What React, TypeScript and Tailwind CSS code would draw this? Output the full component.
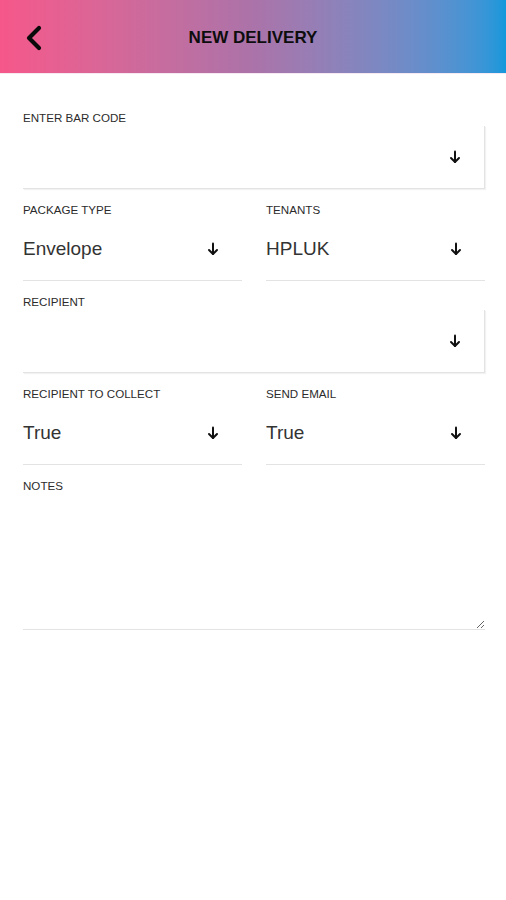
import React from 'react';

const font = { fontFamily: '"Liberation Sans", Arial, sans-serif' };

const DownArrow: React.FC = () => (
  <svg width="12" height="14" viewBox="0 0 12 14" fill="none" stroke="#111" strokeWidth="2" strokeLinecap="round" strokeLinejoin="round">
    <path d="M6 1.5 V12" />
    <path d="M2 8 L6 12 L10 8" />
  </svg>
);

interface FieldProps {
  label: string;
  value?: string;
  boxed?: boolean;
}

const Field: React.FC<FieldProps> = ({ label, value, boxed }) => (
  <div className="flex flex-col">
    <label className="text-[11.6px] leading-[14px] text-[#2b2b2b] uppercase">{label}</label>
    <div
      className={`h-[63px] mt-px flex items-center justify-between pr-[23px] border-b border-[#e3e3e3] ${
        boxed ? 'border-r shadow-[1px_1px_1px_rgba(0,0,0,0.05)]' : ''
      }`}
    >
      <span className="text-[19px] text-[#333] pt-[1px]">{value}</span>
      <DownArrow />
    </div>
  </div>
);

export default function App() {
  return (
    <div className="min-h-screen bg-white" style={font}>
      {/* Header */}
      <header className="h-[74px] grid grid-cols-[64px_1fr_64px] items-center bg-gradient-to-r from-[#f6578a] via-[#ab73a9] to-[#1298db] border-b border-[#f6e9f1]">
        <button className="pl-[23px] pt-[2px] flex items-center">
          <svg width="22" height="26" viewBox="0 0 22 26" fill="none" stroke="#0a0a0a" strokeWidth="4.2" strokeLinecap="round" strokeLinejoin="round">
            <path d="M16 3 L6 13 L16 23" />
          </svg>
        </button>
        <h1 className="text-center text-[17px] font-bold text-[#0d0d0d] pt-[2px]">NEW DELIVERY</h1>
        <div />
      </header>

      {/* Form */}
      <main className="pl-[23px] pr-[21px] pt-[37px] flex flex-col gap-[14px]">
        <Field label="Enter bar code" boxed />
        <div className="grid grid-cols-2 gap-x-[24px]">
          <Field label="Package type" value="Envelope" />
          <Field label="Tenants" value="HPLUK" />
        </div>
        <Field label="Recipient" boxed />
        <div className="grid grid-cols-2 gap-x-[24px]">
          <Field label="Recipient to collect" value="True" />
          <Field label="Send email" value="True" />
        </div>
        <div className="flex flex-col">
          <label className="text-[11.6px] leading-[14px] text-[#2b2b2b] uppercase">Notes</label>
          <textarea className="h-[136px] mt-px border-b border-[#e3e3e3] outline-none resize-y" />
        </div>
      </main>
    </div>
  );
}
